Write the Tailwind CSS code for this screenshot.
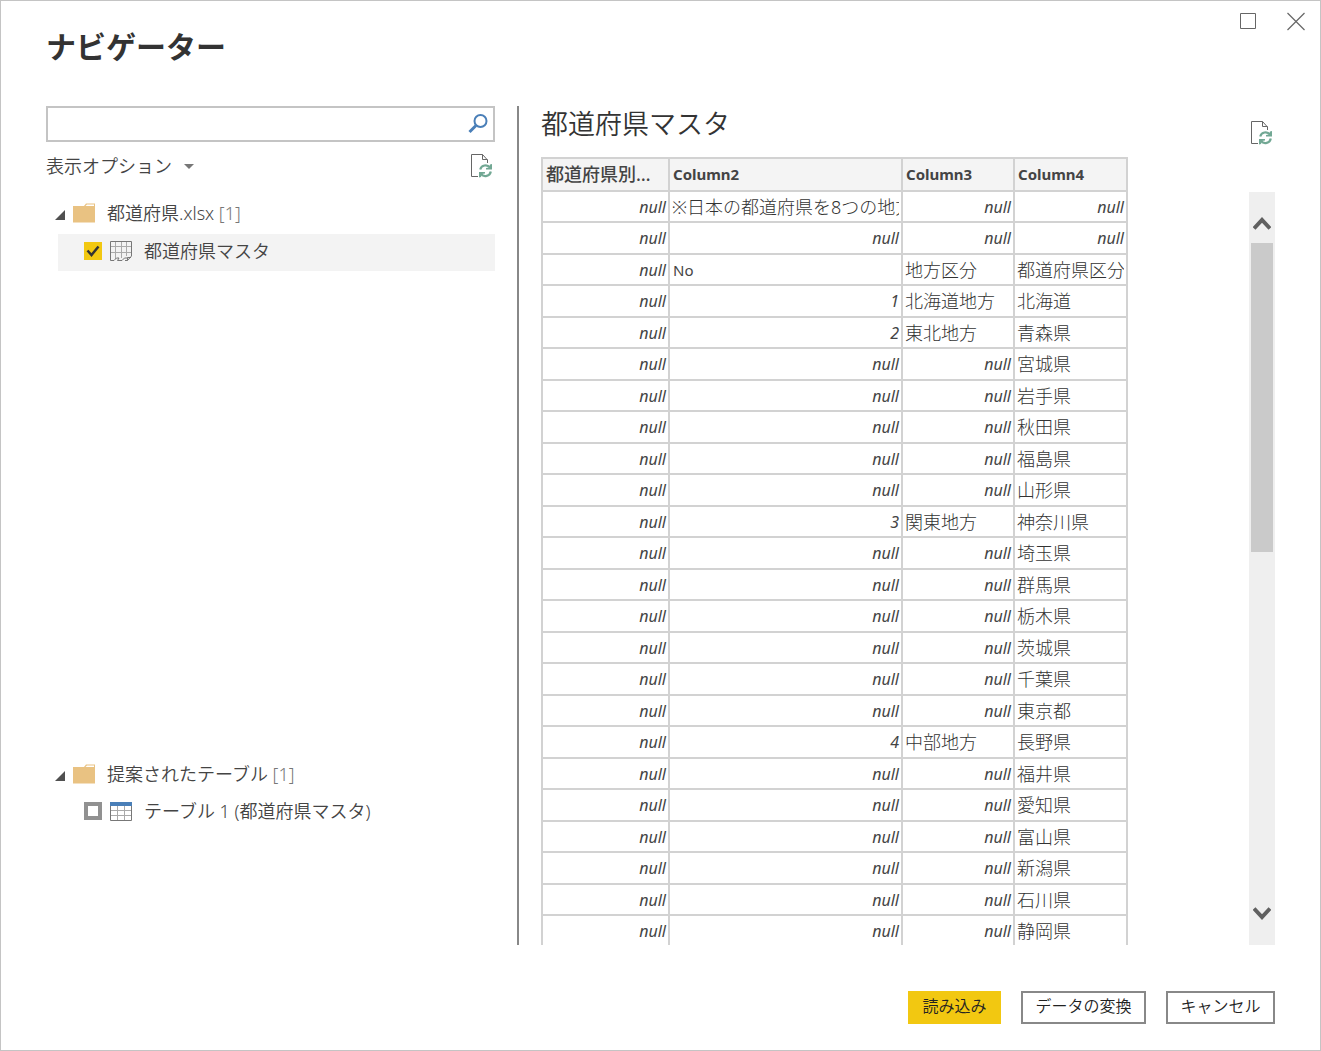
<!DOCTYPE html>
<html lang="ja">
<head>
<meta charset="utf-8">
<meta name="viewport" content="width=device-width, initial-scale=1">
<title>ナビゲーター</title>
<script src="https://cdn.jsdelivr.net/npm/@tailwindcss/browser@4"></script>
</head>
<body class="bg-white font-['Noto_Sans','Noto_Sans_CJK_JP',sans-serif] text-[#444]">
<svg class="hidden" aria-hidden="true">
  <symbol id="refresh" viewBox="0 0 22 25">
    <path d="M7 22.500H.5V.5H11.500L16.500 6V9" fill="none" stroke="#666"/>
    <path d="M11.500 .5V5.500H16.500" fill="none" stroke="#666"/>
    <path d="M9.200 15.500A5.600 5.600 0 0 1 19 13.500M19.800 17.500A5.600 5.600 0 0 1 10 20" fill="none" stroke="#72a894" stroke-width="2.200"/>
    <path d="M21 10V15.500H15V14L18 13.500L19 10.500ZM8 23.500V18H14V19.500L11 20L10 23Z" fill="#72a894"/>
  </symbol>
  <symbol id="folder" viewBox="0 0 22 20">
    <path d="M0 3H11L13 .5H22V19.500H0Z" fill="#e9c282"/>
    <path d="M12.500 3L14 1.500H21V3Z" fill="#fff"/>
  </symbol>
</svg>
<div class="flex h-screen min-h-[500px] flex-col border border-[#c4c4c4]">
  <header class="flex h-[105px] shrink-0 items-start justify-between pl-[45px]">
    <h1 class="pt-6 font-['Noto_Sans_CJK_JP',sans-serif] text-[30px] leading-[40px] font-bold text-[#333]">ナビゲーター</h1>
    <div class="flex gap-8 pt-3 pr-4">
      <button type="button" aria-label="最大化"><svg class="size-4" viewBox="0 0 16 16"><path d="M.5 .5H15.500V15.500H.5Z" fill="none" stroke="#666"/></svg></button>
      <button type="button" aria-label="閉じる"><svg class="size-4 overflow-visible" viewBox="0 0 16 16"><path d="M-.5 0L16.500 17M16.500 0L-.5 17" fill="none" stroke="#666" stroke-width="1.200"/></svg></button>
    </div>
  </header>

  <main class="flex min-h-0 flex-1 pr-[45px] pl-[45px]">
    <section class="flex w-[449px] shrink-0 flex-col" aria-label="項目">
      <div class="flex h-9 shrink-0 items-center border-2 border-[#c4c4c4] pr-[5px]">
        <input type="search" aria-label="検索" class="h-full min-w-0 flex-1 px-2 text-base outline-none">
        <button type="button" aria-label="検索"><svg class="size-5" viewBox="0 0 20 20"><circle cx="12.500" cy="7" r="6" fill="none" stroke="#4a7fb8" stroke-width="2"/><path d="M8 11.500L1.500 18" stroke="#4a7fb8" stroke-width="3"/></svg></button>
      </div>
      <div class="flex h-[53px] shrink-0 items-start justify-between pt-3 pr-[2px]">
        <button type="button" class="flex items-center gap-3 text-lg leading-6 font-[350]">表示オプション
          <svg class="h-[5px] w-[10px]" viewBox="0 0 10 5"><path d="M0 0H10L5 5Z" fill="#777"/></svg>
        </button>
        <button type="button" aria-label="更新"><svg class="h-[25px] w-[22px]"><use href="#refresh"/></svg></button>
      </div>
      <div class="min-h-0 flex-[3] overflow-hidden pl-[9px]">
        <div class="flex h-[39px] items-center pb-1">
          <svg class="mt-1 h-[10px] w-[10px]" viewBox="0 0 10 10"><path d="M10 0V10H0Z" fill="#505050"/></svg>
          <svg class="ml-2 h-5 w-[22px]"><use href="#folder"/></svg>
          <span class="ml-3 text-lg font-[350]">都道府県.xlsx <span class="text-[#777]">[1]</span></span>
        </div>
        <label class="ml-[3px] flex h-[37px] items-center bg-[#f3f3f3] pb-1 pl-[26px]">
          <span class="relative size-[18px]">
            <input type="checkbox" checked class="block size-[18px] appearance-none bg-[#f2c811]">
            <svg class="pointer-events-none absolute inset-0" viewBox="0 0 18 18"><path d="M3.500 8.500L7.500 13L14.500 4.500" fill="none" stroke="#333" stroke-width="2.500"/></svg>
          </span>
          <svg class="ml-2 h-5 w-[22px]" viewBox="0 0 22 20"><path d="M5.500 1V18M11.500 1V17M16.500 1V15M1 5.500H21M1 11.500H21" stroke="#aaa" fill="none"/><path d="M.5 19.500V.5H21.500V15L17.500 19.500H15M.5 19.500H4L6.500 17H9L7.500 19.500H12L14.500 17H17.500M17.500 19.500V16.500H21" fill="none" stroke="#777"/></svg>
          <span class="ml-3 text-lg font-[350]">都道府県マスタ</span>
        </label>
      </div>
      <div class="min-h-0 flex-[1] overflow-hidden pl-[9px]">
        <div class="flex h-9 items-center pb-1">
          <svg class="mt-1 h-[10px] w-[10px]" viewBox="0 0 10 10"><path d="M10 0V10H0Z" fill="#505050"/></svg>
          <svg class="ml-2 h-5 w-[22px]"><use href="#folder"/></svg>
          <span class="ml-3 text-lg font-[350]">提案されたテーブル <span class="text-[#777]">[1]</span></span>
        </div>
        <label class="ml-[3px] flex h-[37px] items-center pb-[2px] pl-[26px]">
          <input type="checkbox" class="size-[18px] appearance-none border-4 border-[#919191] bg-white">
          <svg class="ml-2 h-5 w-[22px]" viewBox="0 0 22 20"><path d="M7.500 4V19M14.500 4V19M1 9.500H21M1 14.500H21" stroke="#aaa"/><path d="M.5 4V19.500H21.500V4" fill="none" stroke="#777"/><path d="M0 1H22V5H0Z" fill="#4a7fb8"/></svg>
          <span class="ml-3 text-lg font-[350]">テーブル 1 (都道府県マスタ)</span>
        </label>
      </div>
    </section>

    <section class="ml-[22px] flex min-w-0 flex-1 flex-col border-l-2 border-[#888] pl-[22px]" aria-label="プレビュー">
      <div class="flex h-[51px] shrink-0 items-start justify-between pr-[2px]">
        <h2 class="text-[27px] leading-9 font-[350] text-[#333]">都道府県マスタ</h2>
        <button type="button" aria-label="更新" class="pt-[15px]"><svg class="h-[25px] w-[22px]"><use href="#refresh"/></svg></button>
      </div>
      <div class="flex min-h-0 flex-1 justify-between">
        <div class="min-w-0 overflow-hidden">
          <table class="w-[587px] table-fixed border-collapse text-[15px] leading-6">
            <colgroup><col class="w-[127px]"><col class="w-[233px]"><col class="w-[112px]"><col class="w-[113px]"></colgroup>
            <thead>
              <tr class="h-[33px] bg-[#f4f4f4] text-left">
                <th class="truncate border-2 border-[#d2d2d2] px-[3px] pt-0 pb-[2px] text-lg leading-6 font-medium">都道府県別の一覧</th>
                <th class="border-2 border-[#d2d2d2] px-[3px] pt-0 pb-[2px]">Column2</th>
                <th class="border-2 border-[#d2d2d2] px-[3px] pt-0 pb-[2px]">Column3</th>
                <th class="border-2 border-[#d2d2d2] px-[3px] pt-0 pb-[2px]">Column4</th>
              </tr>
            </thead>
            <tbody id="rows"></tbody>
          </table>
        </div>
        <div class="mt-[35px] flex w-[26px] shrink-0 flex-col items-center bg-[#efefef]">
          <button type="button" aria-label="上へ" class="flex h-[51px] shrink-0 items-center pt-3"><svg class="h-[14px] w-[18px]" viewBox="0 0 18 14"><path d="M1 11.500L9 3L17 11.500" fill="none" stroke="#606060" stroke-width="4"/></svg></button>
          <div class="h-[309px] w-[22px] bg-[#cacaca]"></div>
          <button type="button" aria-label="下へ" class="mt-auto flex h-[51px] shrink-0 items-center pb-[14px]"><svg class="h-[14px] w-[18px]" viewBox="0 0 18 14"><path d="M1 2.500L9 11L17 2.500" fill="none" stroke="#606060" stroke-width="4"/></svg></button>
        </div>
      </div>
    </section>
  </main>

  <footer class="flex h-[105px] shrink-0 items-start justify-end gap-5 pt-[46px] pr-[45px] text-base leading-6 font-[350] text-[#222]">
    <button type="button" class="h-[33px] w-[93px] bg-[#f2c811] pb-1">読み込み</button>
    <button type="button" class="h-[33px] w-[125px] border-2 border-[#888] pb-1">データの変換</button>
    <button type="button" class="h-[33px] w-[109px] border-2 border-[#888] pb-1">キャンセル</button>
  </footer>
</div>
<script>
  const rows = [
    ['※日本の都道府県を8つの地方に区分', null, null], [null, null, null],
    ['No', '地方区分', '都道府県区分'], [1, '北海道地方', '北海道'], [2, '東北地方', '青森県'],
    [null, null, '宮城県'], [null, null, '岩手県'], [null, null, '秋田県'], [null, null, '福島県'], [null, null, '山形県'],
    [3, '関東地方', '神奈川県'], [null, null, '埼玉県'], [null, null, '群馬県'], [null, null, '栃木県'], [null, null, '茨城県'],
    [null, null, '千葉県'], [null, null, '東京都'], [4, '中部地方', '長野県'], [null, null, '福井県'], [null, null, '愛知県'],
    [null, null, '富山県'], [null, null, '新潟県'], [null, null, '石川県'], [null, null, '静岡県']
  ];
  const cell = v => typeof v !== 'string'
    ? `<td class="border-2 border-[#d2d2d2] px-[2px] py-0 text-right text-base leading-6 italic">${v}</td>`
    : /^[A-Za-z]+$/.test(v) ? `<td class="border-2 border-[#d2d2d2] px-[3px] py-0">${v}</td>`
    : `<td class="border-2 border-[#d2d2d2] px-[2px] py-0 text-lg leading-6 font-light text-[#333]"><div class="overflow-hidden whitespace-nowrap">${v}</div></td>`;
  document.getElementById('rows').innerHTML = rows.map(r =>
    `<tr class="h-[31px] even:h-[32px]">${[null, ...r].map(cell).join('')}</tr>`).join('');
</script>
</body>
</html>
